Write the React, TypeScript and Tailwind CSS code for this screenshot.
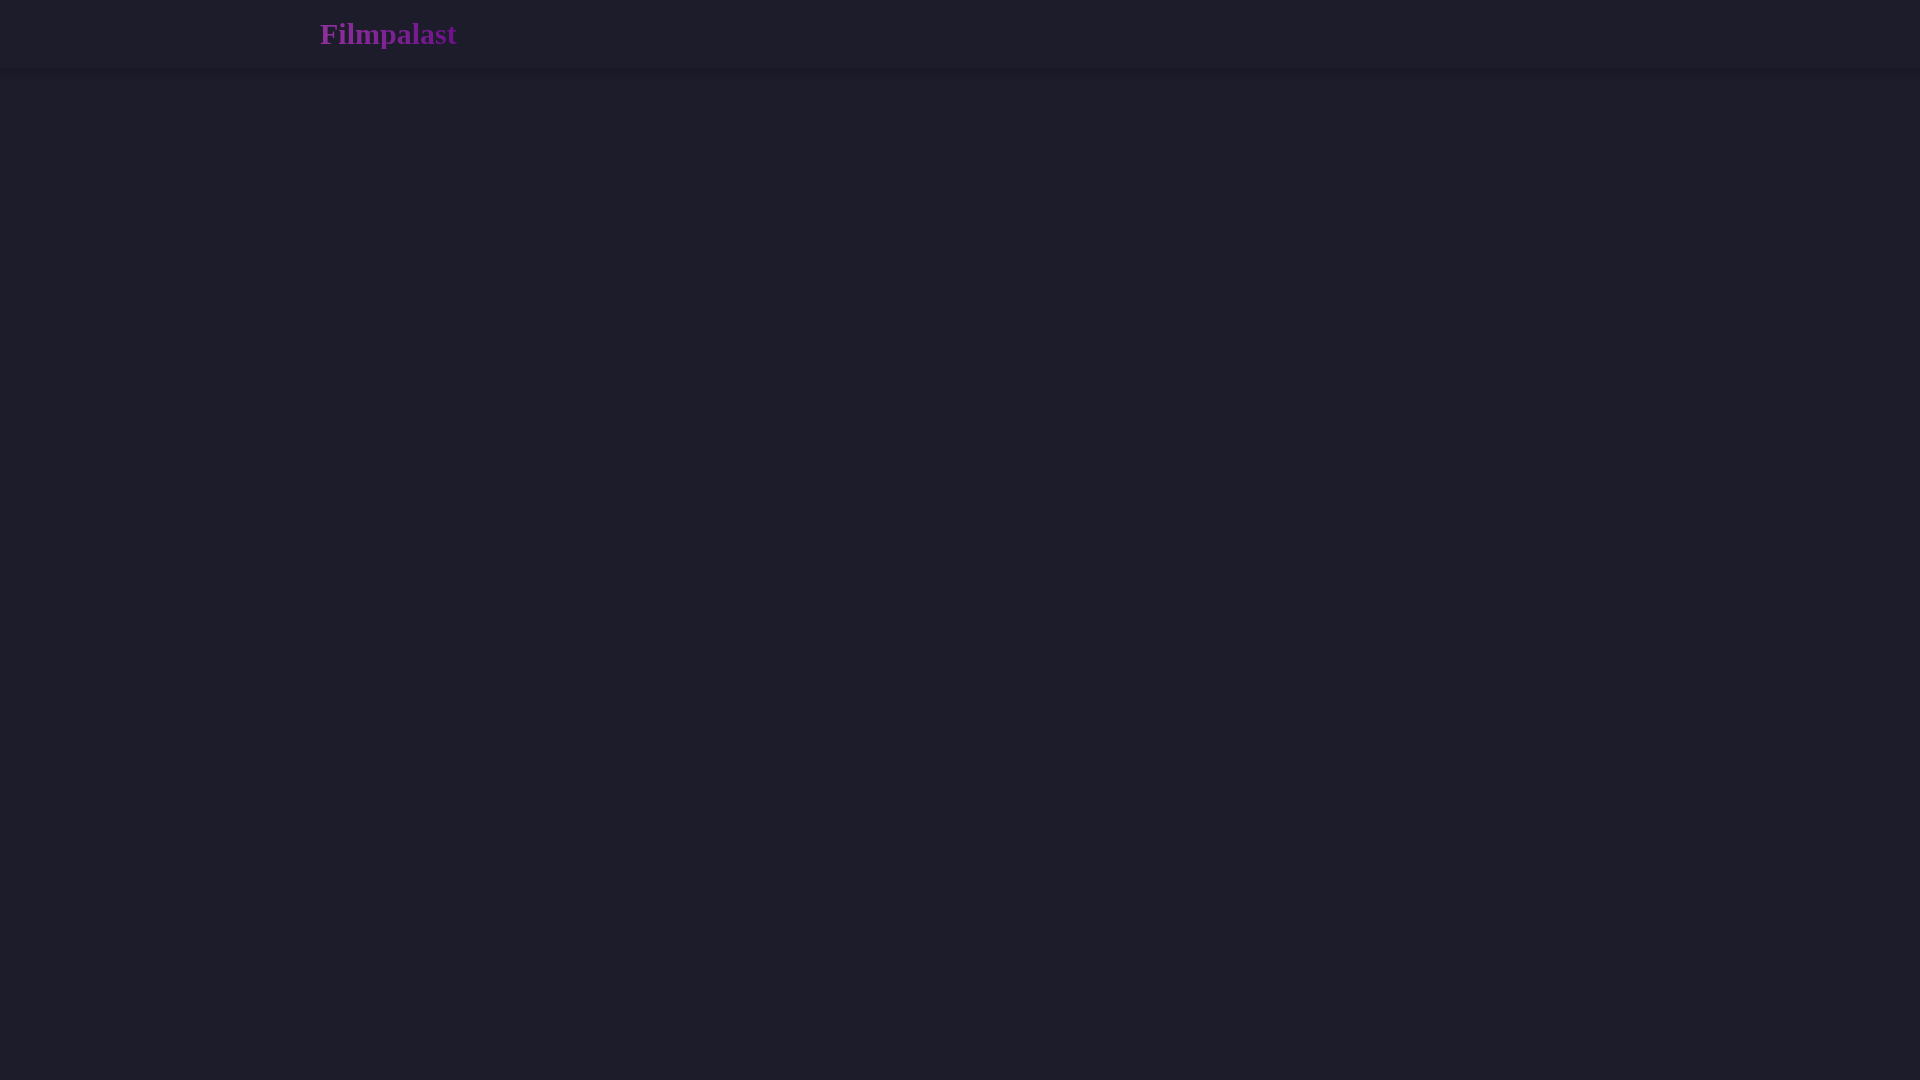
export default function App() {
  return (
    <div className="min-h-screen w-full bg-[#1c1c2a]">
      <header className="h-[68px] w-full bg-[#1c1c2a] shadow-[0_4px_10px_rgba(0,0,0,0.15)]">
        <div className="mx-auto flex h-full max-w-[1280px] items-center">
          <span
            className="bg-gradient-to-r from-[#8f309c] to-[#6f0f8c] bg-clip-text text-[30px] font-bold leading-none text-transparent"
            style={{ fontFamily: '"Liberation Serif", "Times New Roman", serif' }}
          >
            Filmpalast
          </span>
        </div>
      </header>
    </div>
  );
}
